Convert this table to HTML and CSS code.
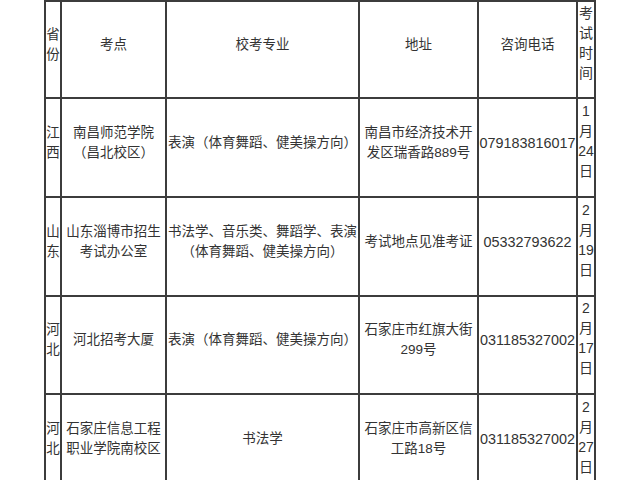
FILE: index.html
```html
<!DOCTYPE html>
<html lang="zh-CN">
<head>
<meta charset="utf-8">
<title>校考考点</title>
<link rel="stylesheet" href="styles.css">
</head>
<body>
<table class="exam">
  <colgroup>
    <col class="c-prov">
    <col class="c-site">
    <col class="c-major">
    <col class="c-addr">
    <col class="c-tel">
    <col class="c-date">
  </colgroup>
  <tr class="r-head">
    <td>省<br>份</td>
    <td>考点</td>
    <td>校考专业</td>
    <td>地址</td>
    <td>咨询电话</td>
    <td class="date">考<br>试<br>时<br>间</td>
  </tr>
  <tr class="r-body">
    <td>江<br>西</td>
    <td>南昌师范学院<br>（昌北校区）</td>
    <td>表演（体育舞蹈、健美操方向）</td>
    <td>南昌市经济技术开<br>发区瑞香路889号</td>
    <td class="tel">079183816017</td>
    <td class="date">1<br>月<br>24<br>日</td>
  </tr>
  <tr class="r-body">
    <td>山<br>东</td>
    <td>山东淄博市招生<br>考试办公室</td>
    <td>书法学、音乐类、舞蹈学、表演<br>（体育舞蹈、健美操方向）</td>
    <td>考试地点见准考证</td>
    <td class="tel">05332793622</td>
    <td class="date">2<br>月<br>19<br>日</td>
  </tr>
  <tr class="r-body3">
    <td>河<br>北</td>
    <td>河北招考大厦</td>
    <td>表演（体育舞蹈、健美操方向）</td>
    <td>石家庄市红旗大街<br>299号</td>
    <td class="tel">031185327002</td>
    <td class="date">2<br>月<br>17<br>日</td>
  </tr>
  <tr class="r-body">
    <td>河<br>北</td>
    <td>石家庄信息工程<br>职业学院南校区</td>
    <td>书法学</td>
    <td>石家庄市高新区信<br>工路18号</td>
    <td class="tel">031185327002</td>
    <td class="date">2<br>月<br>27<br>日</td>
  </tr>
</table>
</body>
</html>
```

FILE: styles.css
```css
html, body {
  margin: 0;
  padding: 0;
  overflow: hidden;
  background: #ffffff;
}

.exam {
  margin: 0 0 0 44px;
  table-layout: fixed;
  width: 552px;
  border-collapse: separate;
  border-spacing: 2px;
  background: #3c3c3c;
  font-family: "Liberation Sans", "Noto Sans CJK SC", sans-serif;
  font-size: 13.5px;
  line-height: 20px;
  color: #333333;
}

.c-prov { width: 14px; }
.c-site { width: 103px; }
.c-major { width: 191px; }
.c-addr { width: 117px; }
.c-tel { width: 97px; }
.c-date { width: 16px; }

.exam td {
  background: #ffffff;
  padding: 0 0 10px 0;
  text-align: center;
  vertical-align: middle;
  overflow: hidden;
}

.r-head { height: 95px; }
.r-body { height: 97px; }
.r-body3 { height: 96px; }

.exam td.tel {
  font-size: 14.4px;
  white-space: nowrap;
}

.exam td.date {
  font-size: 14px;
  padding-bottom: 14px;
}
```
